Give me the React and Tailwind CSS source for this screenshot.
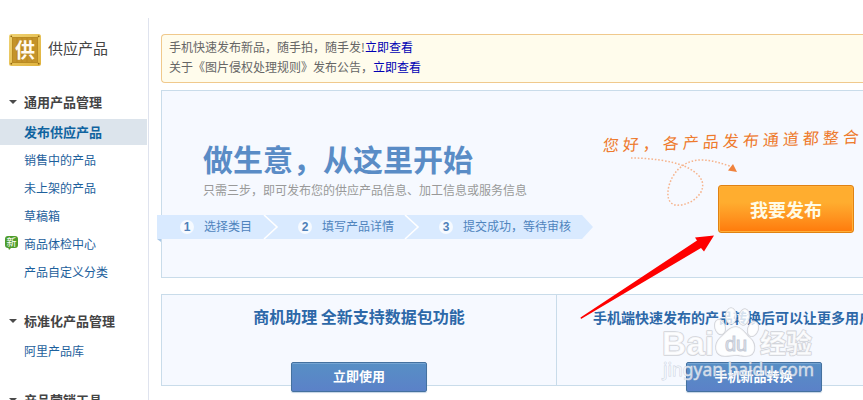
const productLinks = [
  { label: '销售中的产品' },
  { label: '未上架的产品' },
  { label: '草稿箱' },
  { label: '商品体检中心', isNew: true },
  { label: '产品自定义分类' },
];

function Caret() {
  return (
    <svg className="w-2 h-1 mr-[7px] shrink-0" viewBox="0 0 8 4">
      <path d="M0 0h8L4 4z" fill="#4a4a4a" />
    </svg>
  );
}

function GroupTitle({ children }) {
  return (
    <h2 className="flex h-5 items-center pl-[9px] text-[13px] leading-5 font-bold text-[#444]">
      <Caret />
      {children}
    </h2>
  );
}

function NewBadge() {
  return (
    <span className="relative w-[13px] h-3 mr-1.5 -mt-1 rounded-[3px] bg-[#4f9d2b] text-[10px] leading-3 text-center text-white">
      新
      <svg className="absolute left-[3px] top-[11px] w-1 h-[3px]" viewBox="0 0 4 3">
        <path d="M0 0h4L1 3z" fill="#4f9d2b" />
      </svg>
    </span>
  );
}

function Sidebar() {
  return (
    <aside className="w-[149px] shrink-0 mt-[18px] pt-4 pr-px border-r border-[#dfe3ee]">
      <div className="flex h-8 pl-[9px]">
        <svg className="w-8 h-8" viewBox="0 0 32 32">
          <defs>
            <linearGradient id="gold" x1="0" y1="0" x2="1" y2="1">
              <stop offset="0" stopColor="#efd273" />
              <stop offset="1" stopColor="#e0b23c" />
            </linearGradient>
          </defs>
          <rect width="32" height="32" rx="2.5" fill="url(#gold)" />
          <rect x="3.5" y="3.5" width="25" height="25" fill="#c4932a" stroke="#b98a22" />
          <path d="M8 4v24M13 4v24M18 4v24M23 4v24" stroke="#b98720" strokeWidth="1" />
          <g fill="#8f6410">
            <circle cx="2.3" cy="2.3" r="0.9" />
            <circle cx="29.7" cy="2.3" r="0.9" />
            <circle cx="2.3" cy="29.7" r="0.9" />
            <circle cx="29.7" cy="29.7" r="0.9" />
          </g>
          <text x="16" y="23.5" textAnchor="middle" fontSize="20" fontWeight="700" fill="#fffaf0">供</text>
        </svg>
        <h1 className="pl-[7px] text-[15px] leading-[28px] text-[#444]">供应产品</h1>
      </div>

      <nav className="pt-[26px]">
        <GroupTitle>通用产品管理</GroupTitle>
        <a className="block h-[26px] mt-[7px] mb-px pl-6 bg-[#dce4ec] text-[13px] leading-[26px] font-bold text-[#0f63a0]">
          发布供应产品
        </a>
        {productLinks.map((link) => (
          <a key={link.label} className="flex h-7 items-center pl-[5px] text-xs leading-7 text-[#1d609c]">
            {link.isNew ? <NewBadge /> : <span className="w-[19px]" />}
            {link.label}
          </a>
        ))}
        <div className="h-[25px]" />
        <GroupTitle>标准化产品管理</GroupTitle>
        <a className="block h-7 mt-1.5 pl-6 text-xs leading-7 text-[#1d609c]">阿里产品库</a>
        <div className="h-[25px]" />
        <GroupTitle>产品营销工具</GroupTitle>
      </nav>
    </aside>
  );
}

function Notice() {
  return (
    <div className="h-[49px] pt-0.5 pl-[7px] rounded-l-[4px] border border-r-0 border-[#f0c98c] bg-[#fffcec] text-xs leading-5 text-[#666]">
      <p>
        手机快速发布新品，随手拍，随手发!<a className="text-[#0000b4]">立即查看</a>
      </p>
      <p>
        关于《图片侵权处理规则》发布公告，<a className="text-[#0000b4]">立即查看</a>
      </p>
    </div>
  );
}

function Step({ number, children }) {
  return (
    <>
      <span className="w-3.5 h-3.5 mt-[5px] mr-2.5 shrink-0 rounded-full bg-[#f6faff] font-['Liberation_Sans'] text-xs leading-[14px] font-bold text-center text-[#4f80b8]">
        {number}
      </span>
      <span className="leading-[22px]">{children}</span>
    </>
  );
}

function Steps() {
  return (
    <div className="relative w-[436px] h-[27px] -ml-[5px] mt-[15px]">
      <svg className="absolute inset-0" width="436" height="27" viewBox="0 0 436 27">
        <path d="M0 0h425l11 12-11 12H0z" fill="#d9eaff" />
        <path d="M0 24h4v3z" fill="#a9c8e8" />
        <path d="M107 0l13 12-13 12M248 0l13 12-13 12" fill="none" stroke="#fff" strokeWidth="1.6" />
      </svg>
      <div className="relative flex h-6 text-xs text-[#4f84bd] whitespace-nowrap">
        <div className="flex w-[117px] pl-[23px]">
          <Step number="1">选择类目</Step>
        </div>
        <div className="flex w-[141px] pl-[24px]">
          <Step number="2">填写产品详情</Step>
        </div>
        <div className="flex pl-[24px]">
          <Step number="3">提交成功，等待审核</Step>
        </div>
      </div>
    </div>
  );
}

function Hero() {
  return (
    <section className="flex h-[188px] mt-[7px] border border-r-0 border-[#c9dcea] bg-[#f6f9ff]">
      <div className="w-[440px] shrink-0 pt-[49px]">
        <h2 className="pl-[41px] text-[30px] leading-9 font-bold text-[#5a8cc6]">做生意，从这里开始</h2>
        <p className="pl-[41px] pt-1 text-xs leading-5 text-[#999]">只需三步，即可发布您的供应产品信息、加工信息或服务信息</p>
        <Steps />
      </div>
      <div className="w-[261px] shrink-0 pt-[39px] pl-px">
        <p className="h-5 -rotate-2 -skew-x-6 text-[16px] leading-5 font-normal tracking-[4px] whitespace-nowrap text-[#ee7a2c]">
          您好，各产品发布通道都整合
        </p>
        <svg className="ml-[25px] mt-[5px]" width="115" height="55" viewBox="628 156 115 55">
          <path
            d="M631 159C650 159 672 162 684 167C700 174 706 183 701 193C695 203 684 207 675 206C665 203 667 189 672 179C679 166 690 161 701 161C712 161 720 164 730 167"
            fill="none"
            stroke="#f6b48d"
            strokeWidth="1.5"
            strokeDasharray="1.6 1.8"
          />
          <path d="M733 165L737 173L728 171.500z" fill="#f0833d" />
        </svg>
        <button className="block w-[136px] h-12 -mt-[25px] ml-[115px] rounded-[3px] border border-[#e08212] bg-linear-to-b from-[#ffad2f] from-35% to-[#ff7a09] shadow-[inset_0_0_0_1px_#ffb03b] text-[18px] leading-[46px] font-bold text-[#fffbe6]">
          我要发布
        </button>
      </div>
    </section>
  );
}

function CardButton({ children }) {
  return (
    <button className="w-[136px] h-[30px] shrink-0 rounded-[2px] border border-[#44719f] bg-linear-to-b from-[#578fc5] to-[#5b81c8] shadow-[inset_0_1px_0_#76a5d3,0_1px_1px_#c4d3e5] text-[13px] leading-[26px] font-bold text-white">
      <span className="block h-7">{children}</span>
    </button>
  );
}

function Watermark() {
  return (
    <svg className="absolute left-[655px] top-[300px] w-[165px] h-[85px]" viewBox="655 300 165 85">
      <g fill="#fff" fillOpacity="0.8" stroke="#d0d2d8" strokeWidth="1.6" strokeLinejoin="round" paintOrder="stroke">
        <text x="662" y="355" fontFamily="Liberation Sans" fontSize="34" fontWeight="700" textLength="52" lengthAdjust="spacingAndGlyphs">
          Bai
        </text>
        <ellipse cx="720" cy="327" rx="5" ry="7.500" transform="rotate(-15 720 327)" />
        <ellipse cx="731" cy="316" rx="5" ry="8" />
        <ellipse cx="744" cy="317" rx="5" ry="8" transform="rotate(12 744 317)" />
        <ellipse cx="753" cy="329" rx="5" ry="7.500" transform="rotate(20 753 329)" />
        <path d="M736 327c6 0 9 7 14 11c6 5 7 18-4 18c-5 0-7-1-10-1s-6 1-11 1c-11 0-11-12-5-18c6-5 9-11 16-11z" />
        <text x="760" y="353" fontSize="26" fontWeight="700">经验</text>
      </g>
      <text
        x="736"
        y="351"
        fontFamily="Liberation Sans"
        fontSize="20"
        textAnchor="middle"
        fill="#e3e8f1"
        stroke="#c6cbd6"
        strokeWidth="1"
      >
        du
      </text>
      <text
        x="663"
        y="376"
        fontFamily="Noto Sans"
        fontSize="18.500"
        textLength="151"
        lengthAdjust="spacingAndGlyphs"
        fill="#fff"
        fillOpacity="0.65"
        stroke="#b9c4d6"
        strokeOpacity="0.7"
        strokeWidth="1"
        paintOrder="stroke"
      >
        jingyan.baidu.com
      </text>
    </svg>
  );
}

export default function App() {
  return (
    <div className="relative flex w-[863px] h-[400px] overflow-hidden bg-white font-['Noto_Sans_CJK_SC',sans-serif]">
      <Sidebar />
      <main className="w-[702px] shrink-0 ml-3 pt-[34px]">
        <Notice />
        <Hero />
        <section className="flex h-[92px] mt-4 border border-r-0 border-[#c9dcea] bg-[#f6f9ff] whitespace-nowrap">
          <div className="flex w-[395px] shrink-0 flex-col items-center border-r border-[#c9dcea]">
            <h3 className="h-[67px] pt-[9px] shrink-0 text-base leading-6 font-bold text-[#2d68a8]">商机助理 全新支持数据包功能</h3>
            <CardButton>立即使用</CardButton>
          </div>
          <div className="flex w-[393px] shrink-0 flex-col items-center">
            <h3 className="h-[67px] pt-[9px] pl-9 shrink-0 self-start text-sm leading-[26px] font-bold text-[#2d68a8]">
              手机端快速发布的产品转换后可以让更多用户
            </h3>
            <CardButton>手机新品转换</CardButton>
          </div>
        </section>
      </main>

      {/* red pointer towards the publish button */}
      <svg className="absolute left-[575px] top-[230px] w-[145px] h-[95px]" viewBox="575 230 145 95">
        <path d="M580.500 317.500L697 240.500L695 237.500L714 235.500L704 251.500L701 248L581 319Z" fill="#fe0000" />
      </svg>
      <Watermark />
    </div>
  );
}
